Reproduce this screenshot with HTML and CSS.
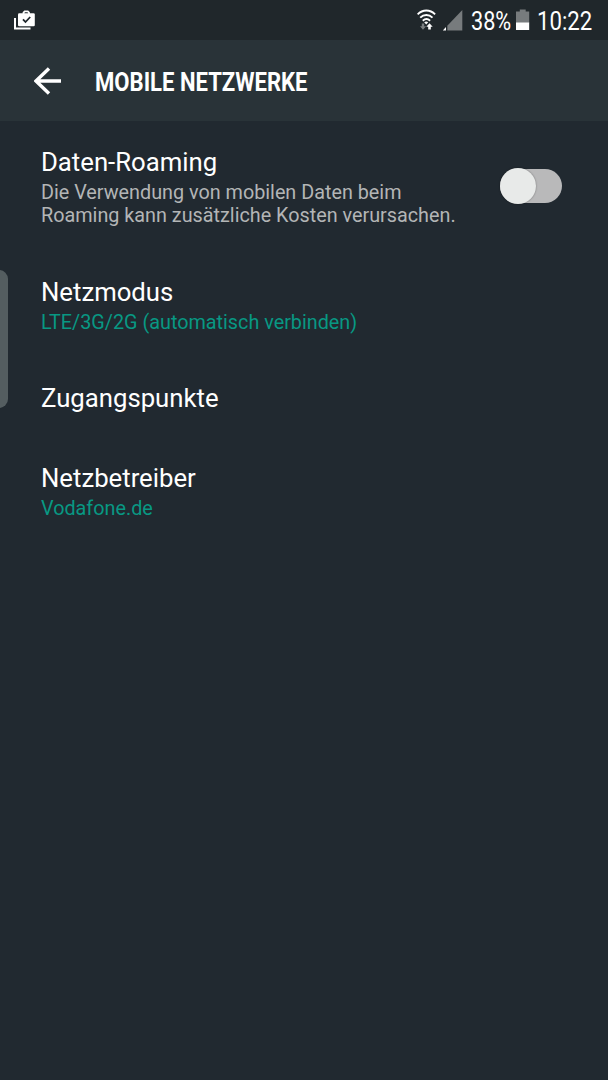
FILE: index.html
```html
<!DOCTYPE html>
<html lang="de">
<head>
<meta charset="utf-8">
<title>Mobile Netzwerke</title>
<link rel="stylesheet" href="styles.css">
</head>
<body>
<div class="screen">
  <header class="status">
    <svg class="status-bag" width="22" height="22" viewBox="0 0 22 22">
      <path d="M1 8V18.6H16.5" fill="none" stroke="#fff" stroke-width="2"/>
      <path d="M9.5 4V2.5L10.7 1.3H13.8L15 2.5V4" fill="none" stroke="#fff" stroke-width="1.8"/>
      <rect x="4" y="3.3" width="16.8" height="13" rx="1.3" fill="#fff"/>
      <path d="M9 9.3L11.5 12L16.2 7" fill="none" stroke="#20272c" stroke-width="1.8"/>
    </svg>
    <div class="status-right">
      <svg class="status-wifi" width="20" height="22" viewBox="0 0 20 22">
        <g fill="none" stroke="#fff" stroke-width="1.9">
          <path d="M.6 5.4C5.6 .2 13.1 .2 18.1 5.4"/>
          <path d="M3.2 8.7C6.8 5 11.9 5 15.5 8.7"/>
          <path d="M5.8 11.7C8.1 9.5 10.8 9.5 13.1 11.7"/>
        </g>
        <path d="M7.2 13.3Q9.2 11.8 11.2 13.3L9.2 15.4Z" fill="#fff"/>
        <path d="M4.8 14.6H7.2V17.2H9.1L6 20.8L3 17.2H4.8Z" fill="#7b7f81"/>
        <path d="M12.5 14.2L15.7 17.8H13.8V20.6H11.2V17.8H9.3Z" fill="#fff"/>
      </svg>
      <svg class="status-signal" width="20" height="21" viewBox="0 0 20 21">
        <path d="M19.3 0V20.5H4.3V15.8Z" fill="#777b7d"/>
        <path d="M3 17V20.5H-.3Z" fill="#fff"/>
      </svg>
      <span class="status-percent">38%</span>
      <svg class="status-battery" width="14" height="21" viewBox="0 0 14 21">
        <path d="M3.8 .5H9.7V2.5H13.2V14H0V2.5H3.8Z" fill="#777b7d"/>
        <path d="M0 13.5H13.2V21H0Z" fill="#fff"/>
      </svg>
      <span class="status-time">10:22</span>
    </div>
  </header>
  <div class="appbar">
    <svg class="back" width="28" height="28" viewBox="0 0 28 28">
      <path d="M15 1.5L2 14L15 26.5M2 14H27" fill="none" stroke="#fff" stroke-width="3.4"/>
    </svg>
    <h1 class="title">MOBILE NETZWERKE</h1>
  </div>
  <main class="list">
    <section class="item item-roaming">
      <div class="roaming-text">
        <h2 class="name">Daten-Roaming</h2>
        <p class="note">Die Verwendung von mobilen Daten beim<br>Roaming kann zusätzliche Kosten verursachen.</p>
      </div>
      <div class="switch"><div class="knob"></div></div>
    </section>
    <section class="item item-mode">
      <h2 class="name">Netzmodus</h2>
      <p class="value">LTE/3G/2G (automatisch verbinden)</p>
    </section>
    <section class="item item-apn">
      <h2 class="name">Zugangspunkte</h2>
    </section>
    <section class="item">
      <h2 class="name">Netzbetreiber</h2>
      <p class="value">Vodafone.de</p>
    </section>
  </main>
  <div class="edge-handle"></div>
</div>
</body>
</html>
```
FILE: styles.css
```css
* { box-sizing: border-box; margin: 0; padding: 0; }
body { background: #212930; font-family: Roboto, sans-serif; color: #fff; }
svg { display: block; flex: none; }
.screen { position: relative; width: 608px; height: 1080px; overflow: hidden; }

.status { display: flex; justify-content: space-between; height: 40px; padding: 9px 0 0 14px; background: #20272b; }
.status-bag { margin-top: 1px; }
.status-right { display: flex; width: 191px; height: 30px; }
.status-percent, .status-time { font-size: 25.5px; line-height: 24px; white-space: nowrap; transform-origin: 0 0; }
.status-signal { margin: 1px 0 0 6px; }
.status-percent { width: 41px; margin-left: 8px; transform: scaleX(.85); }
.status-battery { margin: 0 0 0 4px; }
.status-time { width: 56px; margin-left: 7px; transform: scaleX(.87); }

.appbar { display: flex; height: 81px; padding: 27px 0 0 34px; background: #293338; }
.title { margin-left: 33px; font-size: 26px; font-weight: 700; line-height: 30px; white-space: nowrap; transform: scaleX(.849); transform-origin: 0 0; }

.list { padding: 25px 0 0 40.5px; }
.item-roaming { display: flex; height: 130px; }
.roaming-text { width: 459.5px; }
.item-mode { height: 106px; }
.item-apn { height: 80px; }
.name { font-size: 26px; font-weight: 400; line-height: 32px; white-space: nowrap; transform: scaleX(.989); transform-origin: 0 0; }
.note, .value { margin-top: 3px; font-size: 20px; line-height: 23px; white-space: nowrap; transform: scaleX(.989); transform-origin: 0 0; }
.note { color: #b3b5b6; }
.value { color: #089883; }
.switch { width: 62px; height: 34px; margin-top: 23px; border-radius: 17px; background: #b9b9ba; }
.knob { width: 36px; height: 36px; margin-top: -1px; border-radius: 50%; background: #e8eae9; box-shadow: 0 0 2px #0006; }
.edge-handle { position: absolute; left: -10px; top: 270px; width: 18px; height: 138px; border-radius: 9px; background: #545d60; }
```
